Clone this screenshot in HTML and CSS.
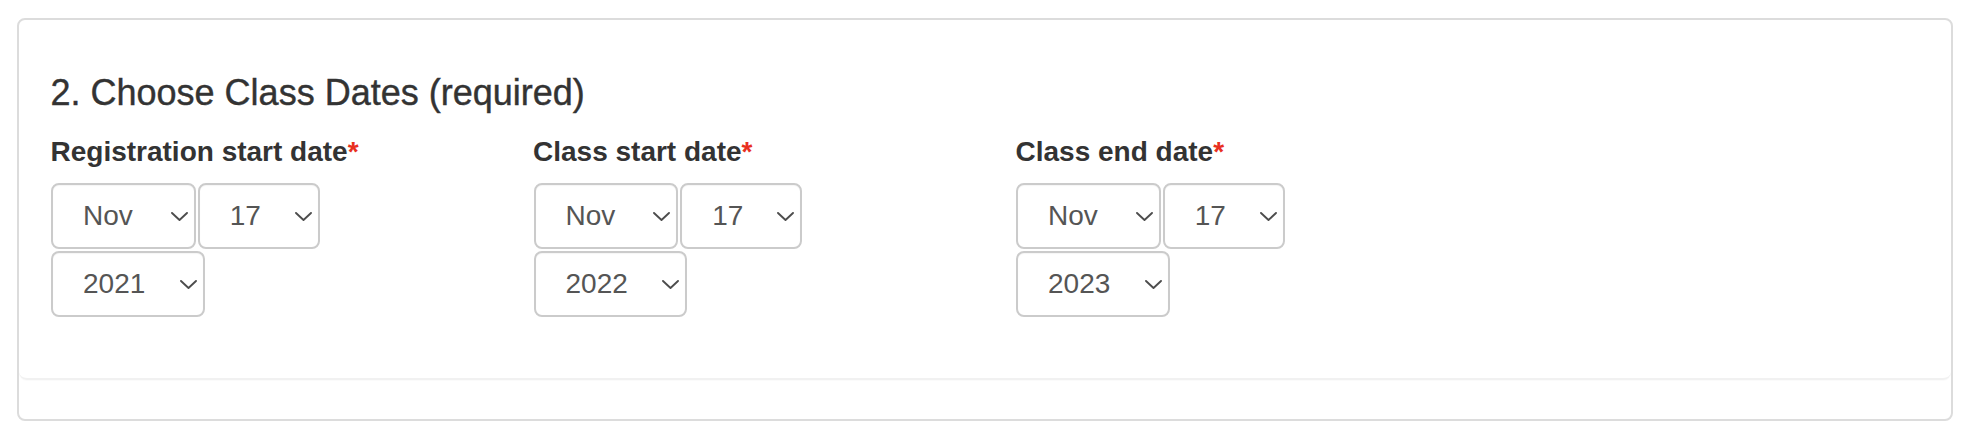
FILE: index.html
```html
<!DOCTYPE html>
<html lang="en">
<head>
<meta charset="utf-8">
<title>Choose Class Dates</title>
<link rel="stylesheet" href="styles.css">
</head>
<body>
<div class="panel">
  <div class="panel-body">
    <h3 class="title">2. Choose Class Dates (required)</h3>
    <div class="cols">
      <div class="col">
        <div class="label">Registration start date<span class="req">*</span></div>
        <div class="date-group">
          <div class="sel-row">
            <div class="select month"><span>Nov</span><svg class="chev" width="17" height="9" viewBox="0 0 17 9"><polyline points="1,1 8.5,8 16,1"/></svg></div>
            <div class="select day"><span>17</span><svg class="chev" width="17" height="9" viewBox="0 0 17 9"><polyline points="1,1 8.5,8 16,1"/></svg></div>
          </div>
          <div class="sel-row">
            <div class="select year"><span>2021</span><svg class="chev" width="17" height="9" viewBox="0 0 17 9"><polyline points="1,1 8.5,8 16,1"/></svg></div>
          </div>
        </div>
      </div>
      <div class="col">
        <div class="label">Class start date<span class="req">*</span></div>
        <div class="date-group">
          <div class="sel-row">
            <div class="select month"><span>Nov</span><svg class="chev" width="17" height="9" viewBox="0 0 17 9"><polyline points="1,1 8.5,8 16,1"/></svg></div>
            <div class="select day"><span>17</span><svg class="chev" width="17" height="9" viewBox="0 0 17 9"><polyline points="1,1 8.5,8 16,1"/></svg></div>
          </div>
          <div class="sel-row">
            <div class="select year"><span>2022</span><svg class="chev" width="17" height="9" viewBox="0 0 17 9"><polyline points="1,1 8.5,8 16,1"/></svg></div>
          </div>
        </div>
      </div>
      <div class="col">
        <div class="label">Class end date<span class="req">*</span></div>
        <div class="date-group">
          <div class="sel-row">
            <div class="select month"><span>Nov</span><svg class="chev" width="17" height="9" viewBox="0 0 17 9"><polyline points="1,1 8.5,8 16,1"/></svg></div>
            <div class="select day"><span>17</span><svg class="chev" width="17" height="9" viewBox="0 0 17 9"><polyline points="1,1 8.5,8 16,1"/></svg></div>
          </div>
          <div class="sel-row">
            <div class="select year"><span>2023</span><svg class="chev" width="17" height="9" viewBox="0 0 17 9"><polyline points="1,1 8.5,8 16,1"/></svg></div>
          </div>
        </div>
      </div>
    </div>
  </div>
  <div class="panel-footer"></div>
</div>
</body>
</html>
```
FILE: styles.css
```css
* { box-sizing: border-box; }

html, body {
  margin: 0;
  padding: 0;
  background: #ffffff;
  font-family: "Liberation Sans", Arial, Helvetica, sans-serif;
  color: #333333;
}

.panel {
  margin: 18px 0 0 17px;
  width: 1936px;
  border: 2px solid #dcdcdc;
  border-radius: 8px;
  background: #ffffff;
}

.panel-body {
  padding: 53px 0 61px 31.5px;
  border-bottom: 2px solid #f1f1f1;
  border-radius: 0 0 8px 8px;
  box-shadow: 0 1px 1px rgba(0, 0, 0, 0.02);
}

.title {
  margin: 0 0 19px 0;
  font-size: 36px;
  line-height: 40px;
  font-weight: 400;
  color: #333333;
  -webkit-text-stroke: 0.4px #333333;
}

.cols {
  display: flex;
}

.col {
  width: 482.5px;
}

.label {
  font-size: 28px;
  line-height: 40px;
  font-weight: 700;
  color: #333333;
  margin-bottom: 11px;
}

.req {
  color: #e8301f;
}

.date-group {
  display: flex;
  flex-direction: column;
  gap: 2px;
}

.sel-row {
  display: flex;
  gap: 2.3px;
}

.select {
  display: flex;
  align-items: center;
  height: 66px;
  padding: 0 6px 0 30px;
  border: 2px solid #cbcbcb;
  border-radius: 8px;
  background: #ffffff;
  font-size: 28px;
  color: #555555;
  box-shadow: inset 0 1px 1px rgba(0, 0, 0, 0.04);
}

.select.month { width: 144.5px; margin-left: 0.5px; }
.select.day { width: 122px; }
.select.year { width: 153.5px; margin-left: 0.5px; }

.chev {
  margin-left: auto;
  flex: none;
}

.chev polyline {
  fill: none;
  stroke: #4d4d4d;
  stroke-width: 1.9;
  stroke-linecap: round;
  stroke-linejoin: round;
}

.panel-footer {
  height: 39px;
}
```
